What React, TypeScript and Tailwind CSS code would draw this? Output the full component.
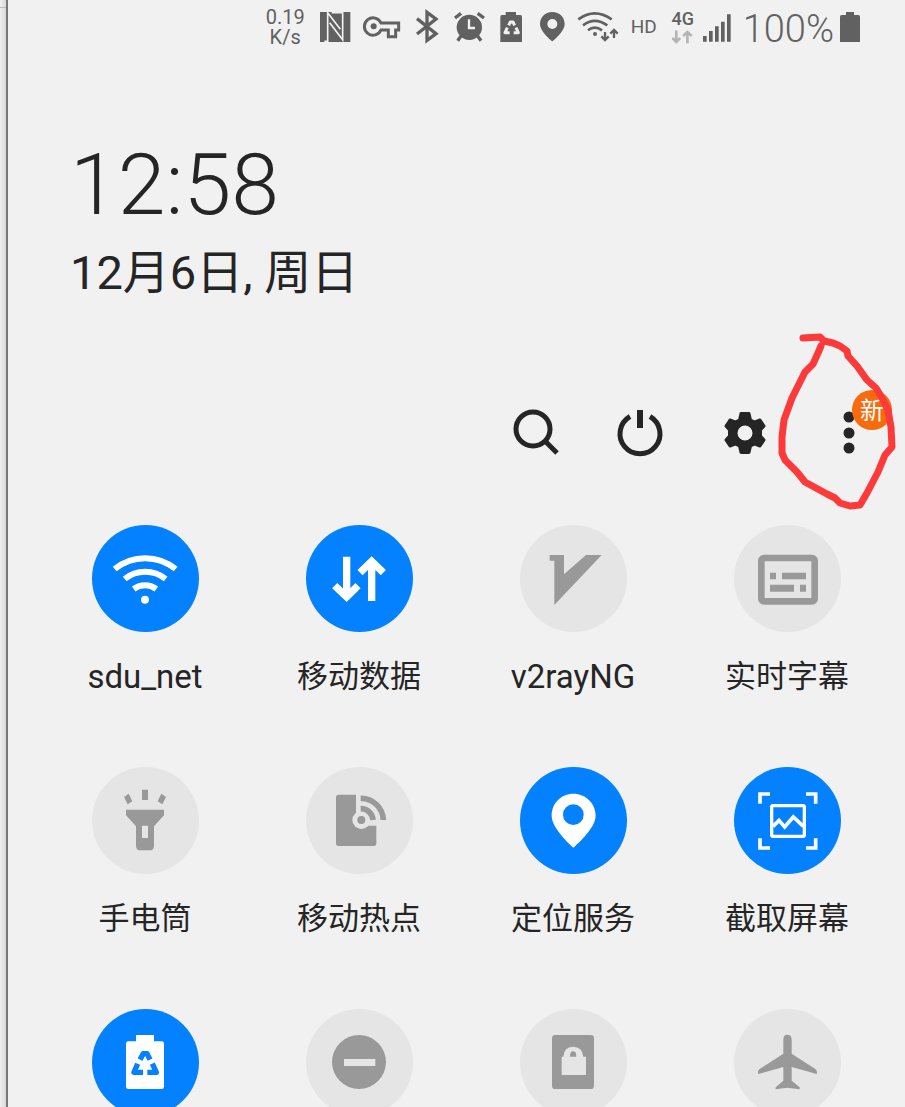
import type { ReactNode } from "react";

const OFF_BG = "#e5e5e5";

function StatusIcon({ x, w, className, children }: { x: number; w: number; className: string; children: ReactNode }) {
  return (
    <svg viewBox={`${x} 27 ${w} 108`} className={`h-9 shrink-0 ${className}`} fill="#616161" stroke="none" aria-hidden="true">
      {children}
    </svg>
  );
}

function StatusBar() {
  return (
    <header className="flex h-[54px] items-center justify-end gap-1.5 pr-[45px] text-[#616161]">
      <div className="text-center text-[20px] leading-5">
        <div>0.19</div>
        <div>K/s</div>
      </div>
      <StatusIcon x={168} w={135} className="w-[45px]">
        <path d="M195 36H286V126H195Z" />
        <path d="M208 124H218V38L256 88M230 38H263V119L224 68" fill="none" stroke="#f1f1f1" strokeWidth="5" />
      </StatusIcon>
      <StatusIcon x={321} w={126} className="w-[42px]">
        <path d="M378 69A26 26 0 1 0 378 90H400V110H422V90H431V69Z" fill="none" stroke="#616161" strokeWidth="9" />
        <circle cx="356" cy="79" r="9" />
      </StatusIcon>
      <StatusIcon x={465} w={102} className="w-[34px]">
        <path d="M486 56L543 101L516 121V37L543 57L486 102" fill="none" stroke="#616161" strokeWidth="10" />
      </StatusIcon>
      <StatusIcon x={585} w={120} className="w-10">
        <circle cx="643" cy="82" r="38" />
        <path d="M618 108L608 122M668 108L678 122M600 54L618 40M668 40L687 54" fill="none" stroke="#616161" strokeWidth="10" />
        <path d="M642 58V84H660" fill="none" stroke="#f1f1f1" strokeWidth="7" />
      </StatusIcon>
      <StatusIcon x={723} w={96} className="w-8">
        <path d="M752 36H783V45H796Q801 45 801 50V126H736V50Q736 45 741 45H752Z" />
        <path
          d="M761 76L766 66H774L779 76M757 83L750 98H764M783 83L790 98H776"
          fill="none"
          stroke="#f1f1f1"
          strokeWidth="9"
          strokeLinejoin="round"
        />
      </StatusIcon>
      <StatusIcon x={837} w={111} className="w-[37px]">
        <path
          fillRule="evenodd"
          d="M892 36C870 36 855 52 855 72C855 96 892 124 892 124C892 124 929 96 929 72C929 52 914 36 892 36ZM892 57A15 15 0 1 1 892 87A15 15 0 1 1 892 57Z"
        />
      </StatusIcon>
      <StatusIcon x={51} w={126} className="w-[42px]">
        <path d="M55 58Q104 22 155 58M69 76Q104 49 142 76M84 91Q104 75 126 91" fill="none" stroke="#616161" strokeWidth="8" />
        <circle cx="105" cy="102" r="6" />
        <path d="M135 96V120M124 109L135 120L146 109M162 114V90M151 101L162 90L173 101" fill="none" stroke="#616161" strokeWidth="7" />
      </StatusIcon>
      <div className="px-1.5 text-[19px] leading-5">HD</div>
      <div className="flex w-7 flex-col items-center justify-center gap-0.5 text-[18px] leading-[18px] font-medium">
        <span>4G</span>
        <svg viewBox="340 88 64 42" className="h-3.5 w-[21px]" fill="none" stroke="#b4b4b4" strokeWidth="8" aria-hidden="true">
          <path d="M353 89V124M341 112L353 124L365 112M387 128V94M374 106L387 94L400 106" />
        </svg>
      </div>
      <StatusIcon x={426} w={102} className="w-[34px]">
        <path d="M426 108h11v17h-11ZM444 93h11v32h-11ZM462 79h11v46h-11ZM480 65h11v60h-11ZM498 43h11v82h-11Z" />
      </StatusIcon>
      <div className="pt-1 text-[38px] leading-10 font-light">100%</div>
      <StatusIcon x={840} w={60} className="w-5">
        <path d="M858 36H882V45H895Q900 45 900 50V126H840V50Q840 45 845 45H858Z" />
      </StatusIcon>
    </header>
  );
}

function Toolbar() {
  const button = "relative flex size-[72px] items-center justify-center";
  return (
    <nav className="flex justify-end gap-8 pr-5" aria-label="工具">
      <button type="button" aria-label="搜索" className={button}>
        <svg viewBox="0 0 72 72" className="size-full" fill="none" stroke="#252525" strokeWidth="5">
          <circle cx="32" cy="32" r="17" />
          <path d="M44 44L56 56" />
        </svg>
      </button>
      <button type="button" aria-label="电源" className={button}>
        <svg viewBox="0 0 72 72" className="size-full" fill="none" stroke="#252525" strokeWidth="5">
          <path d="M25 19.500A20 20 0 1 0 45 19.500" />
          <path d="M35 13V31" strokeWidth="6" />
        </svg>
      </button>
      <button type="button" aria-label="设置" className={button}>
        <svg viewBox="0 0 72 72" className="size-full" fill="#252525">
          <path
            fillRule="evenodd"
            stroke="#252525"
            strokeWidth="3"
            strokeLinejoin="round"
            d="M32 16.500H40L41.500 23L46 25L51 23L55 29L51.500 33V39L55 43L51 49L46 47L41.500 49L40 55.500H32L30.500 49L26 47L21 49L17 43L20.500 39V33L17 29L21 23L26 25L30.500 23ZM36 27A9 9 0 1 0 36 45A9 9 0 1 0 36 27Z"
          />
        </svg>
      </button>
      <div className="relative">
        <button type="button" aria-label="更多选项" className={button}>
          <svg viewBox="0 0 72 72" className="size-full" fill="#252525">
            <circle cx="36" cy="20" r="5.500" />
            <circle cx="36" cy="36" r="5.500" />
            <circle cx="36" cy="51" r="5.500" />
          </svg>
          <span className="absolute -top-[7px] -right-[7px] flex size-10 items-center justify-center rounded-full bg-[#f76b0c] pt-0.5 text-[24px] leading-6 text-white">
            新
          </span>
        </button>
        <svg
          viewBox="775 325 125 190"
          className="pointer-events-none absolute -top-[72px] -left-[38px] h-[190px] w-[125px] max-w-none"
          fill="none"
          stroke="#fd3a3a"
          strokeWidth="7"
          strokeLinecap="round"
          strokeLinejoin="round"
          aria-hidden="true"
        >
          <path d="M803 338L820 337L824 341L833 343L840 346L847 351L848 356L857 366L867 380L876 388L882 398L888 410L891 427L892 447L885 455L878 472L867 493L860 505L850 506L840 503L835 498L827 494L805 482L797 472L790 465L785 460L782 453L782 437L784 420L792 398L805 372L813 364L818 353L821 346" />
        </svg>
      </div>
    </nav>
  );
}

type Tile = { name: string; label?: string; latin?: boolean; on?: boolean; icon: ReactNode };

const tiles: Tile[] = [
  {
    name: "sdu_net",
    label: "sdu_net",
    latin: true,
    on: true,
    icon: (
      <>
        <path
          fill="none"
          stroke="currentColor"
          strokeWidth="18"
          d="M68 132A145 145 0 0 1 251 132M98 162A99 99 0 0 1 221 162M125 192A58 58 0 0 1 193 192"
        />
        <circle cx="159" cy="224" r="12" />
      </>
    ),
  },
  {
    name: "移动数据",
    label: "移动数据",
    on: true,
    icon: (
      <path
        fill="none"
        stroke="currentColor"
        strokeWidth="22"
        d="M122 95V212M86 182L122 216L156 182M197 228V112M162 143L197 109L232 143"
      />
    ),
  },
  {
    name: "v2rayNG",
    label: "v2rayNG",
    latin: true,
    icon: <path d="M89 90H132V148L198 90H245L103 240V107H89Z" />,
  },
  {
    name: "实时字幕",
    label: "实时字幕",
    icon: (
      <>
        <rect x="82" y="99" width="160" height="130" rx="8" fill="none" stroke="currentColor" strokeWidth="20" />
        <path d="M108 143h18v20h-18ZM144 143h72v20h-72ZM108 179h72v21h-72ZM198 179h18v21h-18Z" />
      </>
    ),
  },
  {
    name: "手电筒",
    label: "手电筒",
    icon: (
      <>
        <path d="M150 68h18v31h-18ZM96 90L110 80L121 103L107 112ZM222 90L208 80L197 103L211 112Z" />
        <path
          fillRule="evenodd"
          d="M102 128H216V145L186 178V236Q186 250 172 250H146Q132 250 132 236V178L102 145ZM150 176V213H168V176Z"
        />
      </>
    ),
  },
  {
    name: "移动热点",
    label: "移动热点",
    icon: (
      <>
        <path d="M98 83H150V176H211V229Q211 237 203 237H98Q90 237 90 229V91Q90 83 98 83Z" />
        <circle cx="166" cy="159" r="27" fill={OFF_BG} />
        <circle cx="166" cy="159" r="12" />
        <path fill="none" stroke="currentColor" strokeWidth="17" d="M164 125A36 36 0 0 1 201 159M164 94A67 67 0 0 1 232 159" />
      </>
    ),
  },
  {
    name: "定位服务",
    label: "定位服务",
    on: true,
    icon: (
      <path
        fillRule="evenodd"
        d="M160 80C123 80 95 109 95 146C95 186 160 242 160 242C160 242 227 186 227 146C227 109 197 80 160 80ZM160 112A31 31 0 1 1 160 174A31 31 0 1 1 160 112Z"
      />
    ),
  },
  {
    name: "截取屏幕",
    label: "截取屏幕",
    on: true,
    icon: (
      <g fill="none" stroke="currentColor">
        <path strokeWidth="11" d="M78 110V81H108M216 81H245V110M245 214V243H216M108 243H78V214" />
        <rect x="113" y="116" width="98" height="92" rx="4" strokeWidth="10" />
        <path strokeWidth="11" d="M117 178L135 160L152 180L178 150L208 178" />
      </g>
    ),
  },
  {
    name: "省电模式",
    on: true,
    icon: (
      <>
        <path d="M132 78H186V97H209Q216 97 216 104V233Q216 240 209 240H109Q102 240 102 233V104Q102 97 109 97H132Z" />
        <g fill="none" stroke="#0381fe" strokeWidth="16" strokeLinejoin="round">
          <path d="M144 152L154 134H165L174 152" />
          <path d="M137 164L126 190H153" />
          <path d="M181 164L193 190H166" />
        </g>
      </>
    ),
  },
  {
    name: "请勿打扰",
    icon: <path fillRule="evenodd" d="M159 78A81 81 0 1 1 159 240A81 81 0 1 1 159 78ZM114 150V171H208V150Z" />,
  },
  {
    name: "安全文件夹",
    icon: (
      <>
        <rect x="96" y="78" width="126" height="162" rx="10" />
        <path fill={OFF_BG} d="M125 143H130Q132 113 159 113Q187 113 190 143H198V198H125Z" />
        <path d="M150 143Q150 127 159 127Q169 127 169 143Z" />
      </>
    ),
  },
  {
    name: "飞行模式",
    icon: (
      <path d="M160 77Q173 77 173 92V134L244 180Q251 186 248 195L173 174V215L197 235V241L160 236L125 241V235L148 215V174L73 195Q69 186 77 180L148 134V92Q148 77 160 77Z" />
    ),
  },
];

function QuickTile({ tile }: { tile: Tile }) {
  return (
    <button type="button" aria-label={tile.name} aria-pressed={!!tile.on} className="flex flex-col items-center">
      <span
        className={`flex size-[107px] items-center justify-center rounded-full ${
          tile.on ? "bg-[#0381fe] text-white" : "bg-[#e5e5e5] text-[#999999]"
        }`}
      >
        <svg viewBox="0 0 321 321" className="size-full" fill="currentColor" aria-hidden="true">
          {tile.icon}
        </svg>
      </span>
      {tile.label && (
        <span className={`mt-[25px] leading-10 whitespace-nowrap ${tile.latin ? "text-[33px]" : "text-[31px]"}`}>{tile.label}</span>
      )}
    </button>
  );
}

export default function App() {
  return (
    <div className="flex h-screen overflow-hidden bg-[#f1f1f1] font-['Roboto','Noto_Sans_CJK_SC',sans-serif] text-[#252525]">
      <div className="w-2 shrink-0 border-r-2 border-[#777777] bg-linear-to-r from-[#f0f0f0] to-[#d8d8d8]">
        <div className="mt-[7px] h-px bg-[#bdbdbd]" />
      </div>
      <main className="min-w-0 flex-1">
        <StatusBar />
        <section className="pt-[81px] pl-[62px]">
          <h1 className="text-[86px] leading-[100px] font-light">12:58</h1>
          <p className="mt-2 text-[47px] leading-[60px]">12月6日, 周日</p>
        </section>
        <div className="pt-[94px]">
          <Toolbar />
        </div>
        <section className="grid grid-cols-4 items-start gap-y-[70px] pt-14 pr-[11px] pl-[30px]">
          {tiles.map((tile) => (
            <QuickTile key={tile.name} tile={tile} />
          ))}
        </section>
      </main>
    </div>
  );
}
